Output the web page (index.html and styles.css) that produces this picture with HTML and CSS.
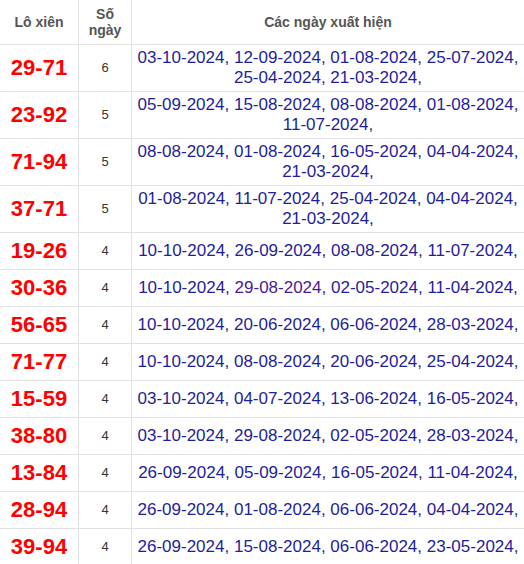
FILE: index.html
```html
<!DOCTYPE html>
<html lang="vi">
<head>
<meta charset="utf-8">
<title>Lô xiên</title>
<link rel="stylesheet" href="styles.css">
</head>
<body>
<table class="lx-table">
  <colgroup>
    <col class="c-pair">
    <col class="c-count">
    <col class="c-dates">
  </colgroup>
  <thead>
    <tr>
      <th>Lô xiên</th>
      <th>Số<br>ngày</th>
      <th>Các ngày xuất hiện</th>
    </tr>
  </thead>
  <tbody>
    <tr><td class="pair">29-71</td><td class="count">6</td><td class="dates"><a>03-10-2024</a>, <a>12-09-2024</a>, <a>01-08-2024</a>, <a>25-07-2024</a>, <a>25-04-2024</a>, <a>21-03-2024</a>,</td></tr>
    <tr><td class="pair">23-92</td><td class="count">5</td><td class="dates"><a>05-09-2024</a>, <a>15-08-2024</a>, <a>08-08-2024</a>, <a>01-08-2024</a>, <a>11-07-2024</a>,</td></tr>
    <tr><td class="pair">71-94</td><td class="count">5</td><td class="dates"><a>08-08-2024</a>, <a>01-08-2024</a>, <a>16-05-2024</a>, <a>04-04-2024</a>, <a>21-03-2024</a>,</td></tr>
    <tr><td class="pair">37-71</td><td class="count">5</td><td class="dates"><a>01-08-2024</a>, <a>11-07-2024</a>, <a>25-04-2024</a>, <a>04-04-2024</a>, <a>21-03-2024</a>,</td></tr>
    <tr><td class="pair">19-26</td><td class="count">4</td><td class="dates"><a>10-10-2024</a>, <a>26-09-2024</a>, <a>08-08-2024</a>, <a>11-07-2024</a>,</td></tr>
    <tr><td class="pair">30-36</td><td class="count">4</td><td class="dates"><a>10-10-2024</a>, <a class="visited">29-08-2024</a>, <a>02-05-2024</a>, <a>11-04-2024</a>,</td></tr>
    <tr><td class="pair">56-65</td><td class="count">4</td><td class="dates"><a>10-10-2024</a>, <a>20-06-2024</a>, <a>06-06-2024</a>, <a>28-03-2024</a>,</td></tr>
    <tr><td class="pair">71-77</td><td class="count">4</td><td class="dates"><a>10-10-2024</a>, <a>08-08-2024</a>, <a>20-06-2024</a>, <a>25-04-2024</a>,</td></tr>
    <tr><td class="pair">15-59</td><td class="count">4</td><td class="dates"><a>03-10-2024</a>, <a>04-07-2024</a>, <a>13-06-2024</a>, <a>16-05-2024</a>,</td></tr>
    <tr><td class="pair">38-80</td><td class="count">4</td><td class="dates"><a>03-10-2024</a>, <a>29-08-2024</a>, <a>02-05-2024</a>, <a>28-03-2024</a>,</td></tr>
    <tr><td class="pair">13-84</td><td class="count">4</td><td class="dates"><a>26-09-2024</a>, <a>05-09-2024</a>, <a>16-05-2024</a>, <a>11-04-2024</a>,</td></tr>
    <tr><td class="pair">28-94</td><td class="count">4</td><td class="dates"><a>26-09-2024</a>, <a>01-08-2024</a>, <a>06-06-2024</a>, <a>04-04-2024</a>,</td></tr>
    <tr><td class="pair">39-94</td><td class="count">4</td><td class="dates"><a>26-09-2024</a>, <a>15-08-2024</a>, <a>06-06-2024</a>, <a>23-05-2024</a>,</td></tr>
  </tbody>
</table>
</body>
</html>
```

FILE: styles.css
```css
html, body {
  margin: 0;
  padding: 0;
  background: #ffffff;
}

body {
  font-family: "Liberation Sans", Arial, sans-serif;
  color: #333333;
}

.lx-table {
  width: 524px;
  table-layout: fixed;
  border-collapse: separate;
  border-spacing: 0;
}

.c-pair { width: 78px; }
.c-count { width: 53px; }
.c-dates { width: 393px; }

.lx-table th,
.lx-table td {
  border-bottom: 1px solid #e2e2e2;
  border-left: 1px solid #e2e2e2;
  text-align: center;
  vertical-align: middle;
}

.lx-table th:first-child,
.lx-table td:first-child {
  border-left: 0;
}

.lx-table th {
  height: 38px;
  padding: 3px 4px;
  font-size: 14px;
  line-height: 16px;
  font-weight: bold;
  color: #555555;
}

.lx-table td {
  padding: 3px 4px;
}

.pair {
  font-size: 22px;
  line-height: 30px;
  font-weight: bold;
  color: #ff0000;
}

.count {
  font-size: 13px;
  line-height: 20px;
  color: #333333;
}

.dates {
  font-size: 17px;
  line-height: 20px;
  color: #1e1e9c;
}

.dates a {
  color: #1e1e9c;
  text-decoration: none;
}

.dates a.visited {
  color: #4a1a94;
}
```
